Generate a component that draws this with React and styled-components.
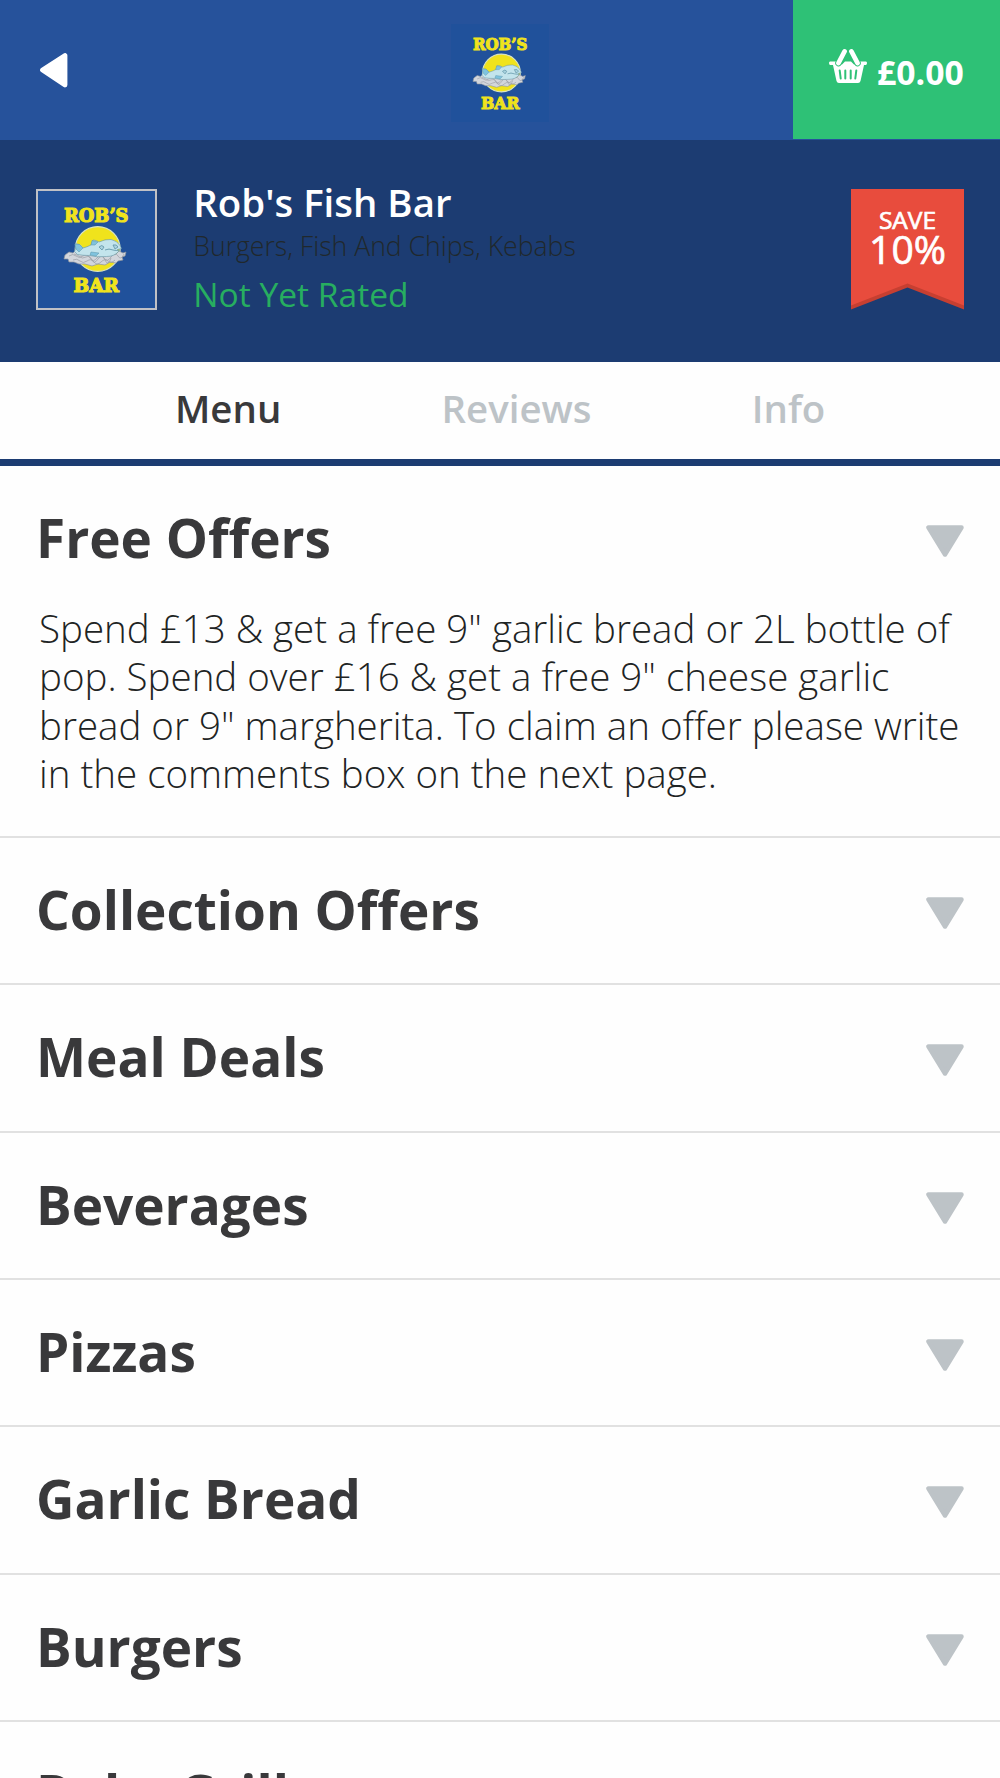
import React from "react";
import styled, { createGlobalStyle } from "styled-components";

const GlobalStyle = createGlobalStyle`
  * {
    box-sizing: border-box;
  }
  body {
    margin: 0;
    background-color: #fefefe;
    font-family: "Open Sans", "Noto Sans", sans-serif;
    overflow: hidden;
  }
  h1, h2, p {
    margin: 0;
  }
  button {
    border: none;
    background: none;
    padding: 0;
    font-family: inherit;
    color: inherit;
  }
  svg {
    display: block;
    flex: none;
  }
`;

const Page = styled.main`
  width: 1000px;
  height: 1778px;
  overflow: hidden;
`;

const TopBar = styled.header`
  display: grid;
  grid-template-columns: 1fr 98px 1fr;
  align-items: start;
  height: 140px;
  background-color: #26529b;
`;

const BackButton = styled.button`
  width: 68px;
  padding: 53px 0 0 40px;
`;

const Brand = styled.div`
  margin-top: 24px;
`;

const Basket = styled.button`
  justify-self: end;
  display: flex;
  align-items: center;
  gap: 10px;
  width: 207px;
  height: 139px;
  padding: 5px 0 0 36px;
  background-color: #2ec176;
  color: white;
  font-size: 33.7px;
  font-weight: 700;
  svg {
    margin-bottom: 12px;
  }
`;

const Hero = styled.section`
  display: flex;
  align-items: flex-start;
  height: 222px;
  padding: 48.5px 36px 0;
  background-color: #1c3c72;
`;

const Thumb = styled.div`
  width: 121px;
  height: 121px;
  border: 2.5px solid #c0c1c6;
  background-color: #20519b;
`;

const Details = styled.div`
  flex: 1;
  margin: -9px 0 0 36.3px;
`;

const Name = styled.h1`
  font-size: 38.4px;
  font-weight: 600;
  line-height: 44px;
  color: white;
`;

const Cuisines = styled.p`
  margin-top: 2.5px;
  font-size: 26.6px;
  font-weight: 300;
  line-height: 40px;
  color: #20282c;
`;

const Rating = styled.p`
  margin-top: 4px;
  font-size: 33.6px;
  line-height: 48px;
  color: #27ae60;
`;

const Ribbon = styled.div`
  width: 113px;
  height: 121px;
  padding-top: 16px;
  background-color: #c63f31;
  clip-path: polygon(0 0, 100% 0, 100% 100%, 50% 99px, 0 100%);
  position: relative;
  text-align: center;
  color: white;
  &::before {
    content: "";
    position: absolute;
    inset: 0;
    background-color: #e84c3d;
    clip-path: polygon(0 0, 100% 0, 100% 117px, 50% 95px, 0 117px);
  }
`;

const RibbonText = styled.p`
  position: relative;
  font-size: ${({ $size }) => $size}px;
  line-height: ${({ $line }) => $line}px;
  -webkit-text-stroke: 0.7px white;
`;

const Tabs = styled.nav`
  display: flex;
  align-items: center;
  gap: 160.3px;
  height: 104px;
  padding: 0 0 5px 175px;
  border-bottom: 7px solid #1c3c72;
`;

const Tab = styled.button`
  font-size: 38.4px;
  font-weight: 600;
  color: ${({ $active }) => ($active ? "#39393b" : "#bdc3c7")};
`;

const Section = styled.section`
  height: ${({ $open }) => ($open ? "372px" : "147.33px")};
  border-bottom: 2px solid #e1e1e1;
`;

const SectionHead = styled.div`
  display: flex;
  justify-content: space-between;
  align-items: center;
  height: 138px;
  padding: 6px 36.5px 0 36px;
  svg {
    margin-top: 6px;
  }
`;

const SectionTitle = styled.h2`
  font-size: 53.1px;
  font-weight: 700;
  line-height: 72px;
  color: #39393b;
`;

const Description = styled.p`
  padding: 0 30px 0 39px;
  font-size: 38.5px;
  font-weight: 300;
  line-height: 48.4px;
  color: #1e2424;
`;

const sections = [
  {
    title: "Free Offers",
    description:
      'Spend £13 & get a free 9" garlic bread or 2L bottle of pop. Spend over £16 & get a free 9" cheese garlic bread or 9" margherita. To claim an offer please write in the comments box on the next page.',
  },
  { title: "Collection Offers" },
  { title: "Meal Deals" },
  { title: "Beverages" },
  { title: "Pizzas" },
  { title: "Garlic Bread" },
  { title: "Burgers" },
  { title: "Robs Grill" },
];

const Logo = ({ size }) => (
  <svg width={size} height={size} viewBox="0 0 116 116">
    <rect width="116" height="116" fill="#20519b" />
    <g
      fill="#f0e31c"
      stroke="#f0e31c"
      strokeWidth="1.2"
      fontFamily="DejaVu Serif"
      fontWeight="700"
      fontSize="18.6"
    >
      <text x="26" y="30.6" textLength="64.500" lengthAdjust="spacingAndGlyphs">ROB’S</text>
      <text x="35.5" y="100.5" textLength="45.500" lengthAdjust="spacingAndGlyphs">BAR</text>
    </g>
    <circle cx="59.7" cy="58" r="22.4" fill="#f0e31c" stroke="#d9e3c0" strokeWidth="1.3" />
    {/* foam */}
    <path
      d="M27 64l4-3 4 1 3-3 6 3 20 2 14-1 3-3 4 2 3-1-1 4-3 1 1 3-5 1-2 2-6-1-5 3-7-1-6 2-7-2-6 0-5-2-5 0-1-3-4 0z"
      fill="#d3d6dc"
      stroke="#8e959d"
      strokeWidth="0.7"
    />
    <path
      d="M31 65q4-3 7 0t7 0 7 2 7 0 7 0 7-1 7-1 6-2M35 69q4-2 7 1t7 0 7 1 7 0 7-1 7-1M36 63q4 1 6 3t6 0 6 3 6-1 7 1 6-2"
      fill="none"
      stroke="#999da5"
      strokeWidth="0.7"
    />
    {/* fish */}
    <path
      d="M37 53q5-1 8 4 4-1 8-3l2-5q3 0 6 2 6-3 12-2.500 6 1 9 6l1.500 3-4 1 1 2q-4 5-12 5-10 1-17-1-7 0-12-1l-3-3 1-3z"
      fill="#c3e4ec"
      stroke="#6795a5"
      strokeWidth="0.6"
    />
    <path
      d="M37 53q5-1 8 4l-4 4-3-3zM54 49.500l6 1.500-3 3-4 0zM53 61l8 1-3 3-6-1z"
      fill="#7fc3de"
      stroke="#5a93a9"
      strokeWidth="0.500"
    />
    <path
      d="M61 56q3-3 5 0l-2 3zM75 54q4-1 5 2l-3 2zM67 59q4-2 8 0 3 1 7 0"
      fill="#a9d3df"
      stroke="#5f93a5"
      strokeWidth="0.8"
    />
  </svg>
);

const BackIcon = () => (
  <svg width="28" height="35" viewBox="0 0 28 35">
    <path
      d="M2.500 17L25 2.500v29.500z"
      fill="white"
      stroke="white"
      strokeWidth="4.800"
      strokeLinejoin="round"
    />
  </svg>
);

const BasketIcon = () => (
  <svg width="38" height="34" viewBox="0 0 38 34">
    <path
      fill="white"
      d="M1 12.500h7l2 3h3l3-3h6l3 3h3l2-3h7q1 0 1 1.500t-1 2h-2l-3.500 16q-.5 2-2.500 2H10q-2 0-2.500-2L4 16H1q-1-.5-1-2t1-1.500z"
    />
    <path d="M15.500 2.500L9.500 14M22.500 2.500l6 11.500" stroke="#2ec176" strokeWidth="6.600" strokeLinecap="round" />
    <path d="M15.500 2.500L9.500 14M22.500 2.500l6 11.500" stroke="white" strokeWidth="4.800" strokeLinecap="round" />
    <path
      d="M10.700 21.500l1 8M16.300 21.500v8M21.700 21.500v8M27.300 21.500l-1 8"
      stroke="#2ec176"
      strokeWidth="2"
      strokeLinecap="round"
    />
  </svg>
);

const Arrow = () => (
  <svg width="38" height="32" viewBox="0 0 38 32">
    <path
      d="M2.500 2.500h33L19 29.500z"
      fill="#bdc3c7"
      stroke="#bdc3c7"
      strokeWidth="4.500"
      strokeLinejoin="round"
    />
  </svg>
);

const App = () => {
  return (
    <Page>
      <GlobalStyle />
      <TopBar>
        <BackButton>
          <BackIcon />
        </BackButton>
        <Brand>
          <Logo size={98} />
        </Brand>
        <Basket>
          <BasketIcon />
          <span>£0.00</span>
        </Basket>
      </TopBar>

      <Hero>
        <Thumb>
          <Logo size={116} />
        </Thumb>
        <Details>
          <Name>Rob's Fish Bar</Name>
          <Cuisines>Burgers, Fish And Chips, Kebabs</Cuisines>
          <Rating>Not Yet Rated</Rating>
        </Details>
        <Ribbon>
          <RibbonText $size={24.5} $line={30}>SAVE</RibbonText>
          <RibbonText $size={39} $line={28}>10%</RibbonText>
        </Ribbon>
      </Hero>

      <Tabs>
        <Tab $active>Menu</Tab>
        <Tab>Reviews</Tab>
        <Tab>Info</Tab>
      </Tabs>

      {sections.map(({ title, description }) => (
        <Section key={title} $open={Boolean(description)}>
          <SectionHead>
            <SectionTitle>{title}</SectionTitle>
            <Arrow />
          </SectionHead>
          {description && <Description>{description}</Description>}
        </Section>
      ))}
    </Page>
  );
};

export default App;
